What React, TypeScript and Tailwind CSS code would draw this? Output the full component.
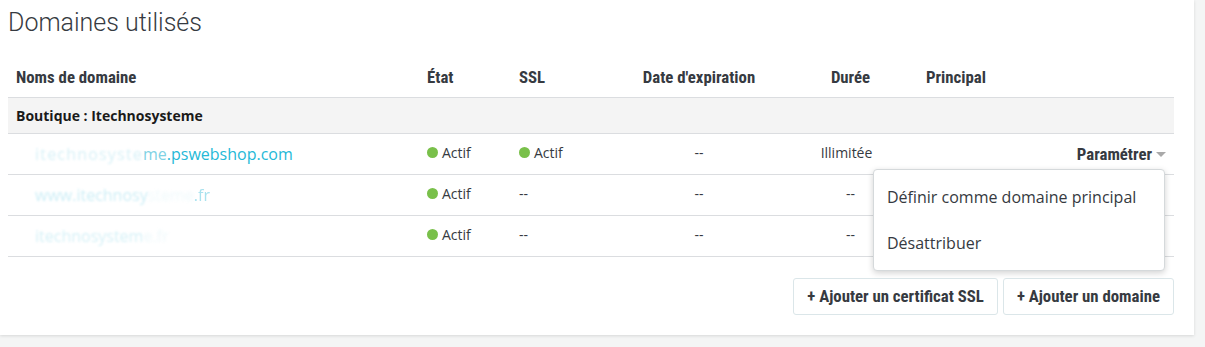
import React from "react";

const cols = "grid grid-cols-[411px_92px_104px_168px_135px_76px_1fr]";

function Dot() {
  return <span className="inline-block w-[11px] h-[11px] rounded-full bg-[#79c04a] mr-[4px]" />;
}

function Actif() {
  return (
    <span className="inline-flex items-center">
      <Dot />
      Actif
    </span>
  );
}

export default function App() {
  const head = "font-['Roboto_Condensed','Roboto',sans-serif] font-bold text-[16.8px] text-[#363a41]";
  return (
    <div className="w-[1205px] h-[347px] bg-[#f4f5f5] overflow-hidden font-['Open_Sans',sans-serif] text-[14px] text-[#363a41]">
      <div className="relative w-[1194px] h-[335px] bg-white shadow-[0_1px_3px_rgba(0,0,0,0.12)] px-[8px] pt-[5px]">
        <h2 className="font-['Roboto',sans-serif] font-light text-[25px] leading-[36px] text-[#363a41]">
          Domaines utilisés
        </h2>
        <div className="w-[1166px] mt-[17px]">
          <div className={`${cols} h-[40px] items-center border-b border-[#dbdde0] ${head}`}>
            <div className="pl-[8px]">Noms de domaine</div>
            <div className="pl-[8px]">État</div>
            <div className="pl-[8px]">SSL</div>
            <div className="text-center">Date d'expiration</div>
            <div className="text-center">Durée</div>
            <div className="text-center">Principal</div>
            <div />
          </div>
          <div className="h-[36px] bg-[#f4f4f4] border-b border-[#dbdde0] flex items-center pl-[8px] font-bold text-[14px] text-[#1a1a1a]">
            Boutique : Itechnosysteme
          </div>
          <div className={`${cols} h-[41px] items-center border-b border-[#dbdde0]`}>
            <div className="pl-[27px] text-[16px] text-[#25b9d7] whitespace-nowrap -mt-[1px]">
              <span className="blur-[1.2px] text-[#d8f1f7] tracking-[1.2px]">itechnosyste</span>
              <span className="text-[#7fd2e4]">me</span>
              <span>.pswebshop.com</span>
            </div>
            <div className="pl-[8px] -mt-[4px]"><Actif /></div>
            <div className="pl-[8px] -mt-[4px]"><Actif /></div>
            <div className="text-center -mt-[3px]">--</div>
            <div className="text-center -mt-[4px] pr-[8px]">Illimitée</div>
            <div />
            <div className="flex justify-end items-center pr-[8px] pt-[1px]">
              <span className={head}>Paramétrer</span>
              <svg width="10" height="6" viewBox="0 0 10 6" className="ml-[4px] mt-[1px]">
                <path d="M0 0 L10 0 L5 5 Z" fill="#a9a9a9" />
              </svg>
            </div>
          </div>
          <div className={`${cols} h-[41px] items-center border-b border-[#dbdde0]`}>
            <div className="pl-[27px] text-[16px] text-[#25b9d7] whitespace-nowrap -mt-[1px]">
              <span className="blur-[1px] text-[#cdeef6]">www.itechnosy</span>
              <span className="blur-[1.4px] text-[#f0fafc]">steme</span>
              <span className="blur-[0.6px] text-[#a9e2ee]">.fr</span>
            </div>
            <div className="pl-[8px] -mt-[4px]"><Actif /></div>
            <div className="pl-[8px] -mt-[3px]">--</div>
            <div className="text-center -mt-[3px]">--</div>
            <div className="text-center -mt-[3px]">--</div>
            <div />
            <div />
          </div>
          <div className={`${cols} h-[41px] items-center border-b border-[#dbdde0]`}>
            <div className="pl-[27px] text-[16px] text-[#25b9d7] whitespace-nowrap -mt-[1px]">
              <span className="blur-[1.1px] text-[#d6f1f7]">itechnosystem</span>
              <span className="blur-[1.4px] text-[#eef9fb]">e.fr</span>
            </div>
            <div className="pl-[8px] -mt-[4px]"><Actif /></div>
            <div className="pl-[8px] -mt-[3px]">--</div>
            <div className="text-center -mt-[3px]">--</div>
            <div className="text-center -mt-[3px]">--</div>
            <div />
            <div />
          </div>
          <div className="flex justify-end gap-[5px] mt-[21px]">
            <button className={`h-[37px] px-[13px] border border-[#dbe6e9] rounded-[3px] bg-white ${head}`}>
              + Ajouter un certificat SSL
            </button>
            <button className={`h-[37px] px-[13px] border border-[#dbe6e9] rounded-[3px] bg-white ${head}`}>
              + Ajouter un domaine
            </button>
          </div>
        </div>
        <div className="absolute left-[873px] top-[169px] w-[292px] bg-white border border-[#d5d9db] rounded-[4px] shadow-[0_2px_6px_rgba(0,0,0,0.18)] py-[4px] text-[16px] text-[#363a41]">
          <div className="h-[46px] flex items-center px-[13px]">Définir comme domaine principal</div>
          <div className="h-[46px] flex items-center px-[13px]">Désattribuer</div>
        </div>
      </div>
    </div>
  );
}
